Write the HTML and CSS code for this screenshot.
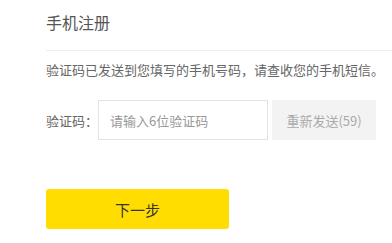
FILE: index.html
```html
<!DOCTYPE html>
<html lang="zh-CN">
<head>
<meta charset="utf-8">
<title>手机注册</title>
<link rel="stylesheet" href="styles.css">
</head>
<body>
<div class="page">
  <div class="header"><h1 class="title">手机注册</h1></div>
  <p class="desc">验证码已发送到您填写的手机号码，请查收您的手机短信。</p>
  <div class="row">
    <label class="label" for="code">验证码：</label>
    <input class="input" id="code" type="text" placeholder="请输入6位验证码">
    <button class="resend" type="button">重新发送(59)</button>
  </div>
  <button class="next" type="button">下一步</button>
</div>
</body>
</html>
```

FILE: styles.css
```css
* { box-sizing: border-box; }
html, body { margin: 0; padding: 0; background: #fff; overflow: hidden; }
body {
  font-family: "Microsoft YaHei", "Noto Sans CJK SC", "Noto Sans", sans-serif;
  color: #666;
}
.page { padding-left: 46px; }
.header {
  padding-top: 11px;
  height: 51px;
  border-bottom: 1px solid #eeeeee;
}
.title {
  margin: 0;
  font-size: 16px;
  line-height: 22px;
  font-weight: normal;
  color: #555;
}
.desc {
  margin: 9px 0 0;
  font-size: 13px;
  line-height: 20px;
  color: #666;
  white-space: nowrap;
}
.row {
  display: flex;
  align-items: center;
  margin-top: 20px;
  height: 40px;
}
.label {
  width: 52px;
  font-size: 13px;
  color: #666;
  white-space: nowrap;
}
.input {
  width: 170px;
  height: 40px;
  border: 1px solid #e3e3e3;
  padding: 0 0 0 11px;
  font-family: inherit;
  font-size: 13px;
  color: #333;
  outline: none;
}
.input::placeholder { color: #999; }
.resend {
  margin-left: 4px;
  width: 104px;
  height: 40px;
  border: none;
  background: #f3f3f3;
  color: #aaa;
  font-family: inherit;
  font-size: 13px;
  padding: 0;
}
.next {
  display: block;
  margin-top: 49px;
  width: 183px;
  height: 40px;
  border: none;
  border-radius: 3px;
  background: #ffdd00;
  color: #333;
  font-family: inherit;
  font-size: 15px;
  padding: 0;
}
```
